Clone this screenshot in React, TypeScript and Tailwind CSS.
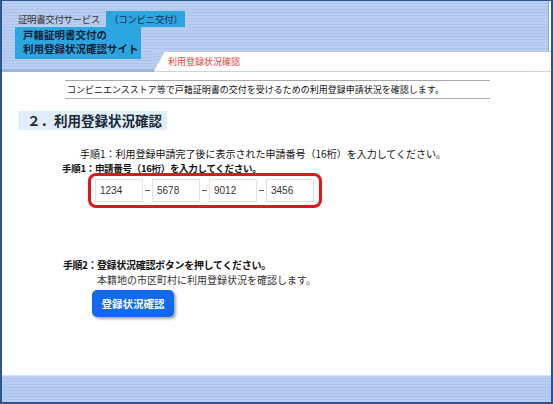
import React, { useState } from "react";

const STRIPES =
  "bg-[repeating-linear-gradient(180deg,#b9cef0_0px,#b9cef0_2px,#adc4ea_2px,#adc4ea_3px)]";

const jp = "font-['Noto_Sans_CJK_JP','Noto_Sans',sans-serif]";

export default function App() {
  const [bango, setBango] = useState(["1234", "5678", "9012", "3456"]);

  const cambiar = (i: number, v: string) => {
    setBango((prev) => prev.map((b, j) => (j === i ? v : b)));
  };

  return (
    <div
      className={`w-[553px] h-[404px] bg-white border-x-2 border-t border-b-2 border-[#2c5491] flex flex-col overflow-hidden text-[#222] ${jp}`}
    >
      {/* cabecera */}
      <div className="h-[71px] flex shrink-0">
        <div className={`w-[152px] shrink-0 ${STRIPES} border-b-[3px] border-[#9fb6dc] pt-[10px] pl-[13px] relative z-10`}>
          <div className="flex items-end whitespace-nowrap">
            <span className="w-[91px] shrink-0 text-[9.5px] leading-[16px] text-[#333] pl-[3px] tracking-[-0.4px]">
              証明書交付サービス
            </span>
            <span className="bg-[#2ca6e0] text-[9.5px] leading-[16px] px-[3px] text-[#1c2a4a] w-[79px] shrink-0 tracking-[-0.3px]">
              （コンビニ交付）
            </span>
          </div>
          <div className="bg-[#2ca6e0] w-[126px] h-[32px] pl-[8px] pt-[1px] text-[10.5px] leading-[13.5px] font-bold text-[#101c33] whitespace-nowrap">
            戸籍証明書交付の
            <br />
            利用登録状況確認サイト
          </div>
        </div>
        <div className="flex-1 flex flex-col">
          <div className={`h-[50px] ${STRIPES} mr-[2px] border-r border-[#8ea6cf]`}></div>
          <div className={`flex-1 ${STRIPES} border-b border-[#c9d4e6]`}>
            <div className="h-full bg-white border-t border-[#c2cbd8] [clip-path:polygon(11px_0,100%_0,100%_100%,0_100%)] pl-[14px] text-[9px] leading-[19px] text-[#e8453c]">
              利用登録状況確認
            </div>
          </div>
        </div>
      </div>

      {/* contenido */}
      <div className="flex-1 flex flex-col">
        <div className="ml-[63px] mr-[61px] mt-[8px] border-y border-[#a8a8a8] h-[19px] pl-[2px] text-[9px] leading-[17px] text-[#111]">
          コンビニエンスストア等で戸籍証明書の交付を受けるための利用登録申請状況を確認します。
        </div>

        <div className="ml-[16px] mt-[12px] w-[149px] h-[19px] bg-[#e0eff7] pl-[9px] text-[13.5px] leading-[19px] font-bold text-[#1d2838]">
          ２．利用登録状況確認
        </div>

        <div className="ml-[78px] mt-[17px] text-[10px] leading-[13px] text-[#111]">
          手順1：利用登録申請完了後に表示された申請番号（16桁）を入力してください。
        </div>
        <div className="ml-[60px] mt-[2px] text-[9.5px] leading-[12px] font-bold text-[#111] tracking-[-0.3px]">
          手順1：申請番号（16桁）を入力してください。
        </div>

        <div className="ml-[86px] mt-[-1px] w-[234px] h-[35px] border-[3px] border-[#e3141c] rounded-[8px] flex items-center pl-[4px]">
          {bango.map((b, i) => (
            <React.Fragment key={i}>
              {i > 0 && (
                <div className="w-[9px] flex justify-center">
                  <div className="w-[5px] h-px bg-[#555]"></div>
                </div>
              )}
              <input
                value={b}
                onChange={(e) => cambiar(i, e.target.value)}
                className="w-[48px] h-[23px] border border-[#e2e2e2] bg-white px-[4px] text-[10px] text-[#333] font-['Liberation_Sans',sans-serif] outline-none"
              />
            </React.Fragment>
          ))}
        </div>

        <div className="ml-[61px] mt-[49px] flex text-[10px] leading-[15px] text-[#111]">
          <span className="font-bold tracking-[-0.5px]">手順2：</span>
          <div>
            <div className="font-bold tracking-[-0.3px]">登録状況確認ボタンを押してください。</div>
            <div className="text-[#333]">本籍地の市区町村に利用登録状況を確認します。</div>
          </div>
        </div>

        <button className="ml-[90px] mt-[3px] w-[82px] h-[27px] rounded-[5px] bg-[#0f6af0] text-white text-[10.5px] font-bold shadow-[2px_2px_3px_rgba(0,0,0,0.35)]">
          登録状況確認
        </button>
      </div>

      {/* pie */}
      <div className={`h-[27px] shrink-0 ${STRIPES} border-t border-[#d6e2f4]`}></div>
    </div>
  );
}
